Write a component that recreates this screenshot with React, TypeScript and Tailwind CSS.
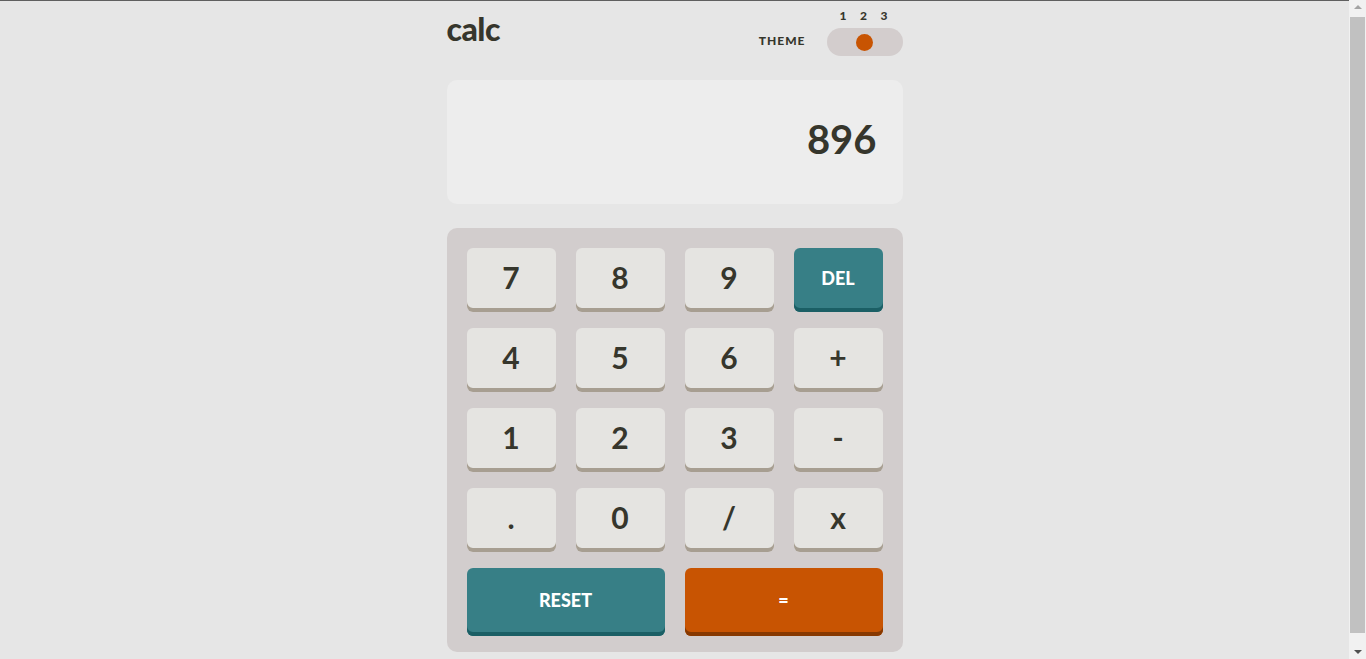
const KEYS: { label: string; kind?: 'del' }[] = [
  { label: '7' }, { label: '8' }, { label: '9' }, { label: 'DEL', kind: 'del' },
  { label: '4' }, { label: '5' }, { label: '6' }, { label: '+' },
  { label: '1' }, { label: '2' }, { label: '3' }, { label: '-' },
  { label: '.' }, { label: '0' }, { label: '/' }, { label: 'x' },
]

function Key({ label, kind }: { label: string; kind?: 'del' }) {
  if (kind === 'del') {
    return (
      <button className="h-[64px] rounded-[6px] bg-[#377f86] pb-[4px] text-[18px] font-black text-white shadow-[inset_0_-4px_0_#1b5f65]">
        {label}
      </button>
    )
  }
  return (
    <button className="h-[64px] rounded-[6px] bg-[#e5e4e1] pb-[7px] text-[30px] font-bold leading-none text-[#36362c] shadow-[inset_0_-4px_0_#a79e91]">
      {label}
    </button>
  )
}

export default function App() {
  return (
    <div
      className="min-h-screen border-t border-[#5f5f5f] bg-[#e6e6e6] pb-[27px] pr-[17px] text-[#36362c]"
      style={{ fontFamily: 'Lato, "Noto Sans", sans-serif' }}
    >
      <div className="mx-auto w-[456px] pt-[7px]">
        <header className="flex items-start justify-between">
          <h1 className="mt-[5px] text-[32px] font-black leading-[32px] tracking-[-0.5px]">calc</h1>
          <div className="flex items-end gap-[21px]">
            <span className="mb-[6px] text-[12px] font-black tracking-[1px]">THEME</span>
            <div className="flex flex-col">
              <div className="flex justify-between pl-[13px] pr-[15px] text-[12px] font-black leading-[16px]">
                <span>1</span>
                <span>2</span>
                <span>3</span>
              </div>
              <div className="mt-[4px] flex h-[28px] w-[76px] items-center justify-center rounded-full bg-[#d3cdcd]">
                <div className="h-[17px] w-[17px] rounded-full bg-[#c85402]" />
              </div>
            </div>
          </div>
        </header>

        <div className="mt-[24px] flex h-[124px] items-center justify-end rounded-[10px] bg-[#ededed] pb-[6px] pr-[26px]">
          <span className="text-[40px] font-bold leading-none">896</span>
        </div>

        <div className="mt-[24px] rounded-[10px] bg-[#d2cdcd] px-[20px] pb-[16px] pt-[20px]">
          <div className="grid grid-cols-4 gap-x-[20px] gap-y-[16px]">
            {KEYS.map((k) => (
              <Key key={k.label} label={k.label} kind={k.kind} />
            ))}
            <button className="col-span-2 h-[68px] rounded-[6px] bg-[#377f86] pb-[4px] text-[18px] font-black text-white shadow-[inset_0_-4px_0_#1b5f65]">
              RESET
            </button>
            <button className="col-span-2 h-[68px] rounded-[6px] bg-[#c85402] pb-[4px] text-[18px] font-black text-white shadow-[inset_0_-4px_0_#873901]">
              =
            </button>
          </div>
        </div>
      </div>

      {/* scrollbar strip as seen in the screenshot */}
      <div className="fixed right-0 top-0 flex h-full w-[17px] flex-col items-center bg-[#f1f1f1]">
        <div className="mt-[5px] h-0 w-0 border-x-[4px] border-b-[4px] border-x-transparent border-b-[#a3a3a3]" />
        <div className="mt-[8px] w-[15px] flex-1 bg-[#c1c1c1]" />
        <div className="mb-[5px] mt-[17px] h-0 w-0 border-x-[4px] border-t-[4px] border-x-transparent border-t-[#505050]" />
      </div>
    </div>
  )
}
